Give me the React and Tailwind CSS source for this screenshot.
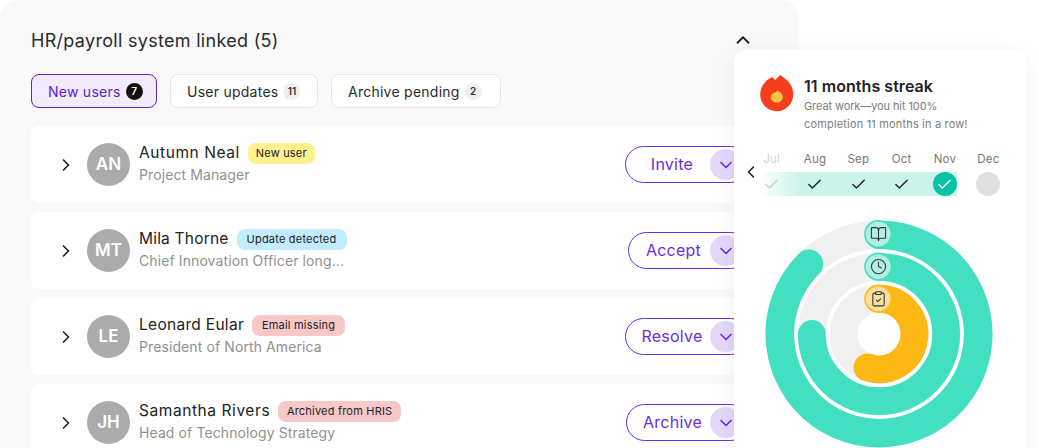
import React from "react";
import { ChevronRight, ChevronDown, ChevronUp, ChevronLeft, Check, BookOpen, Clock, ClipboardCheck } from "lucide-react";

const font = { fontFamily: "Inter, 'Liberation Sans', sans-serif" };

const users = [
  { i: "AN", n: "Autumn Neal", t: "tracking-[0.57px]", r: "Project Manager", b: "New user", bw: "w-[67px]", bc: "bg-[#fdf190]", a: "Invite", w: "w-[124px]" },
  { i: "MT", n: "Mila Thorne", t: "tracking-[0.2px]", r: "Chief Innovation Officer long...", b: "Update detected", bw: "w-[110px]", bc: "bg-[#c3ecff]", a: "Accept", w: "w-[121px]" },
  { i: "LE", n: "Leonard Eular", t: "tracking-[0.3px]", r: "President of North America", b: "Email missing", bw: "w-[93px]", bc: "bg-[#f7c8c8]", a: "Resolve", w: "w-[124px]" },
  { i: "JH", n: "Samantha Rivers", t: "tracking-[0.57px]", r: "Head of Technology Strategy", b: "Archived from HRIS", bw: "w-[123px]", bc: "bg-[#f7c8c8]", a: "Archive", w: "w-[123px]" },
];

function Tab({ label, count, active, cls }) {
  return (
    <div className={`h-[34px] flex items-center pl-[16px] gap-[5px] rounded-[8px] border text-[14px] tracking-[0.25px] ${cls} ${active ? "border-[#5c24d2] bg-[#f1ebfc] text-[#5c24d2]" : "border-[#e6e6e6] bg-white text-[#2b2b2b]"}`}>
      <span>{label}</span>
      <span className={`w-[17px] h-[17px] rounded-full flex items-center justify-center text-[10px] font-semibold tracking-normal ${active ? "bg-[#111] text-white" : "bg-[#efefef] text-[#333]"}`}>{count}</span>
    </div>
  );
}

function Row({ u }) {
  return (
    <div className="h-[77px] shrink-0 bg-white rounded-[8px] flex items-center pl-[25px] pr-[19px]">
      <ChevronRight size={20} strokeWidth={2} className="text-[#222] shrink-0" />
      <div className="ml-[11px] w-[43px] h-[43px] rounded-full bg-[#ababab] text-white flex items-center justify-center text-[17px] font-semibold shrink-0">{u.i}</div>
      <div className="ml-[9px] flex flex-col mt-[-2px]">
        <div className="flex items-center gap-[8px] h-[21px]">
          <span className={`text-[15.5px] text-[#222] ${u.t}`}>{u.n}</span>
          <span className={`h-[21px] rounded-[8px] flex items-center justify-center text-[11px] text-[#222] tracking-[0.2px] ${u.bw} ${u.bc}`}>{u.b}</span>
        </div>
        <div className="text-[14px] leading-[21px] text-[#919191] tracking-[0.1px]">{u.r}</div>
      </div>
      <div className={`ml-auto h-[37px] rounded-full border border-[#6a2ee0] flex items-center pl-[8px] pr-[7px] text-[16px] text-[#6a2ee0] tracking-[0.25px] ${u.w}`}>
        <span className="flex-1 text-center mt-[-2px]">{u.a}</span>
        <span className="w-[31px] h-[31px] rounded-full bg-[#e3d8f9] flex items-center justify-center shrink-0"><ChevronDown size={20} strokeWidth={2} className="text-[#6a2ee0]" /></span>
      </div>
    </div>
  );
}

function Flame() {
  return (
    <svg width="34" height="37" viewBox="0 0 34 37" className="shrink-0">
      <path d="M8.3 4.3 L12.3 2 L15 5 L20.3 0 L26.7 5 C30.5 8.5 33.3 13 33.3 19 C33.3 28.5 26 36.3 17 36.3 C7.5 36.3 0.2 28.5 0.2 19.5 C0.2 13 3.5 8 8.3 4.3 Z" fill="#f43f1f" />
      <path d="M17.5 15.3 C18.5 17 20 17 20.5 17.5 C22 19 22.8 20.5 22.8 22.2 C22.8 25.2 20 27.5 16.7 27.5 C13.4 27.5 10.7 25.2 10.7 22.2 C10.7 20 12.3 18.5 13.8 18 C15.5 17.6 16.8 17 17.5 15.3 Z" fill="#fdc544" />
    </svg>
  );
}

const months = [
  { m: "Jul", s: "faded" },
  { m: "Aug", s: "done" },
  { m: "Sep", s: "done" },
  { m: "Oct", s: "done" },
  { m: "Nov", s: "now" },
  { m: "Dec", s: "next" },
];

function Months() {
  return (
    <div className="relative mt-[16px] ml-[16px] w-[260px] h-[47px] grid grid-cols-6">
      <div className="absolute left-[10px] top-[23px] w-[197px] h-[24px] bg-gradient-to-r from-[#c9f4ea00] via-[#c9f4ea] via-20% to-[#c9f4ea]" />
      {months.map((x) => (
        <div key={x.m} className="relative flex flex-col items-center">
          <div className={`h-[23px] pt-[1px] text-[11.5px] leading-[18px] tracking-[0.25px] ${x.s === "faded" ? "text-[#d4d4d4]" : "text-[#777]"}`}>{x.m}</div>
          <div className={`w-[24px] h-[24px] rounded-full flex items-center justify-center ${x.s === "now" ? "bg-[#06c4a4]" : x.s === "next" ? "bg-[#e0e0e0]" : ""}`}>
            {x.s !== "next" && <Check size={17} strokeWidth={2} className={x.s === "now" ? "text-white" : x.s === "faded" ? "text-[#cfcfcf]" : "text-[#222]"} />}
          </div>
        </div>
      ))}
      <ChevronLeft size={20} strokeWidth={2} className="absolute left-[-9px] top-[13px] text-[#222]" />
    </div>
  );
}

const C = 114;
function arc(r, deg) {
  const a = ((deg - 90) * Math.PI) / 180;
  const x = C + r * Math.cos(a);
  const y = C + r * Math.sin(a);
  return `M ${C} ${C - r} A ${r} ${r} 0 ${deg > 180 ? 1 : 0} 1 ${x} ${y}`;
}

function Donut() {
  const rings = [
    { r: 99.2, w: 28.6, d: 315, c: "#43dfc1" },
    { r: 67.2, w: 27.8, d: 270, c: "#43dfc1" },
    { r: 35.4, w: 27.8, d: 199, c: "#fcb915" },
  ];
  const dots = [
    { r: 100, f: "#b1efe2", s: "#43dfc1", I: BookOpen },
    { r: 67.4, f: "#b1efe2", s: "#43dfc1", I: Clock },
    { r: 35.2, f: "#fedf9b", s: "#fcb915", I: ClipboardCheck },
  ];
  return (
    <div className="relative mt-[24px] ml-[31px] w-[228px] h-[228px]">
      <svg width="228" height="228" viewBox="0 0 228 228">
        {rings.map((x) => (
          <g key={x.r}>
            <circle cx={C} cy={C} r={x.r} fill="none" stroke="#f0f0f0" strokeWidth={x.w} />
            <path d={arc(x.r, x.d)} fill="none" stroke={x.c} strokeWidth={x.w} strokeLinecap="round" />
          </g>
        ))}
        {dots.map((x) => (
          <circle key={x.r} cx={C - 0.8} cy={C - x.r} r="13.2" fill={x.f} stroke={x.s} strokeWidth="1.6" />
        ))}
        {dots.map((x) => {
          const Icon = x.I;
          return <Icon key={x.r} x={C - 0.5 - 8.5} y={C - x.r - 8.5} width={17} height={17} strokeWidth={1.5} color="#2a3a3a" />;
        })}
      </svg>
    </div>
  );
}

export default function App() {
  return (
    <div className="relative w-[1039px] h-[448px] overflow-hidden bg-white" style={font}>
      <div className="w-[799px] h-[480px] bg-[#f9f9f9] rounded-[20px] pt-[28px] pl-[31px] pr-[31px] flex flex-col">
        <div className="flex items-center justify-between h-[24px]">
          <h1 className="text-[18px] font-normal text-[#2b2b2b] tracking-[0.3px]">HR/payroll system linked (5)</h1>
          <ChevronUp size={22} strokeWidth={2} className="text-[#222] mr-[14px]" />
        </div>
        <div className="flex gap-[13px] mt-[22px]">
          <Tab label="New users" count="7" active cls="w-[126px]" />
          <Tab label="User updates" count="11" cls="w-[148px]" />
          <Tab label="Archive pending" count="2" cls="w-[170px]" />
        </div>
        <div className="mt-[18px] flex flex-col gap-[9px]">
          {users.map((u) => <Row key={u.i} u={u} />)}
        </div>
      </div>
      <div className="absolute left-[734px] top-[50px] w-[292px] h-[420px] bg-white rounded-[12px] shadow-[0_4px_24px_rgba(0,0,0,0.06)] pt-[25px]">
        <div className="flex pl-[26px] gap-[10px]">
          <Flame />
          <div className="flex flex-col">
            <div className="text-[16px] font-semibold leading-[22px] text-[#222] tracking-[0.05px]">11 months streak</div>
            <div className="text-[11px] leading-[18px] text-[#7d7d7d]">
              <div className="tracking-[-0.1px]">Great work—you hit 100%</div>
              <div className="tracking-[0.17px]">completion 11 months in a row!</div>
            </div>
          </div>
        </div>
        <Months />
        <Donut />
      </div>
    </div>
  );
}
